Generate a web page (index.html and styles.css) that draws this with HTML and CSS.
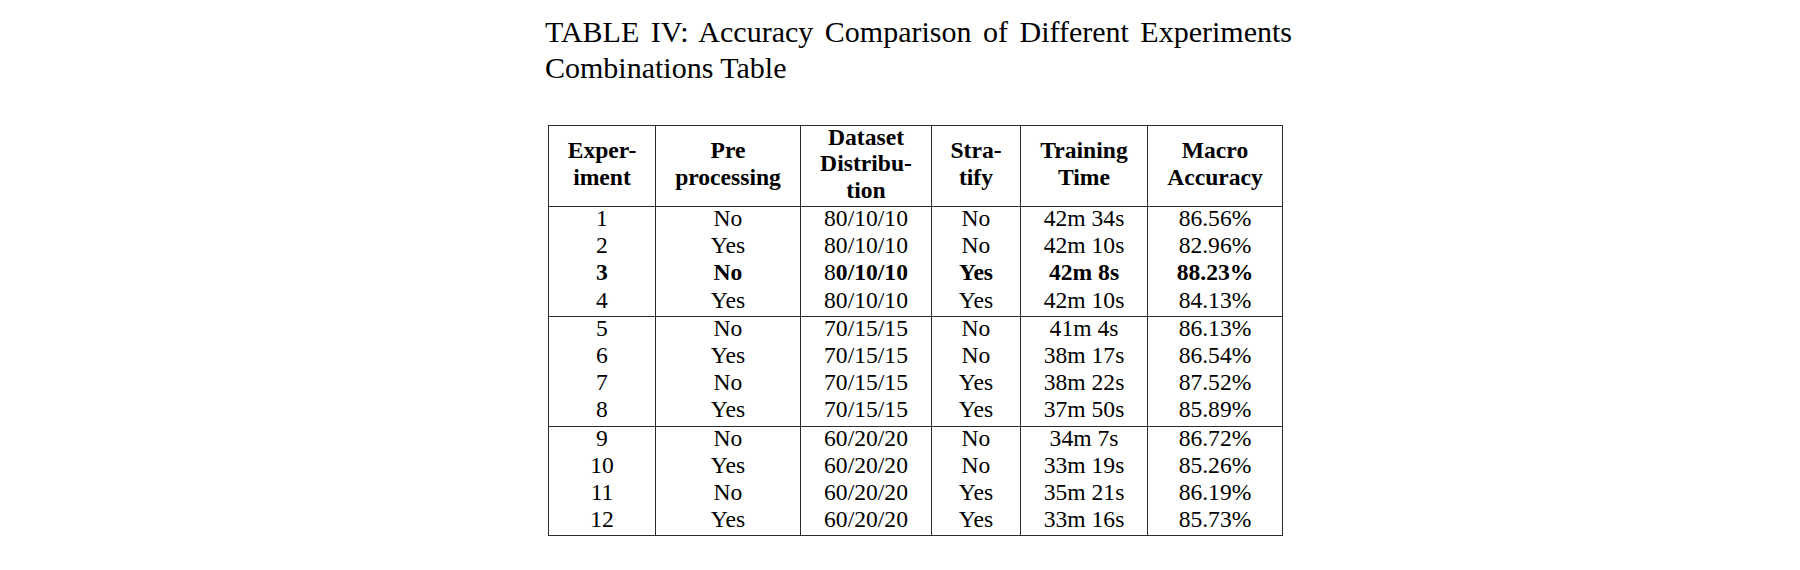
FILE: index.html
```html
<!DOCTYPE html>
<html>
<head>
<meta charset="utf-8">
<link rel="stylesheet" href="styles.css">
</head>
<body>
<div class="page">
  <p class="caption">TABLE IV: Accuracy Comparison of Different Experiments Combinations Table</p>
  <table class="results">
    <colgroup>
      <col class="c1"><col class="c2"><col class="c3"><col class="c4"><col class="c5"><col class="c6">
    </colgroup>
    <thead>
      <tr>
        <th><div class="hd">Exper-<br>iment</div></th>
        <th><div class="hd">Pre<br>processing</div></th>
        <th><div class="hd">Dataset<br>Distribu-<br>tion</div></th>
        <th><div class="hd">Stra-<br>tify</div></th>
        <th><div class="hd">Training<br>Time</div></th>
        <th><div class="hd">Macro<br>Accuracy</div></th>
      </tr>
    </thead>
    <tbody>
      <tr><td>1</td><td>No</td><td>80/10/10</td><td>No</td><td>42m 34s</td><td>86.56%</td></tr>
      <tr><td>2</td><td>Yes</td><td>80/10/10</td><td>No</td><td>42m 10s</td><td>82.96%</td></tr>
      <tr class="best"><td>3</td><td>No</td><td><span class="nb">8</span>0/10/10</td><td>Yes</td><td>42m 8s</td><td>88.23%</td></tr>
      <tr><td>4</td><td>Yes</td><td>80/10/10</td><td>Yes</td><td>42m 10s</td><td>84.13%</td></tr>
    </tbody>
    <tbody>
      <tr><td>5</td><td>No</td><td>70/15/15</td><td>No</td><td>41m 4s</td><td>86.13%</td></tr>
      <tr><td>6</td><td>Yes</td><td>70/15/15</td><td>No</td><td>38m 17s</td><td>86.54%</td></tr>
      <tr><td>7</td><td>No</td><td>70/15/15</td><td>Yes</td><td>38m 22s</td><td>87.52%</td></tr>
      <tr><td>8</td><td>Yes</td><td>70/15/15</td><td>Yes</td><td>37m 50s</td><td>85.89%</td></tr>
    </tbody>
    <tbody>
      <tr><td>9</td><td>No</td><td>60/20/20</td><td>No</td><td>34m 7s</td><td>86.72%</td></tr>
      <tr><td>10</td><td>Yes</td><td>60/20/20</td><td>No</td><td>33m 19s</td><td>85.26%</td></tr>
      <tr><td>11</td><td>No</td><td>60/20/20</td><td>Yes</td><td>35m 21s</td><td>86.19%</td></tr>
      <tr><td>12</td><td>Yes</td><td>60/20/20</td><td>Yes</td><td>33m 16s</td><td>85.73%</td></tr>
    </tbody>
  </table>
</div>
</body>
</html>
```

FILE: styles.css
```css
html, body {
  margin: 0;
  padding: 0;
  background: #ffffff;
}

body {
  font-family: "Liberation Serif", "Times New Roman", serif;
  color: #000000;
  width: 1800px;
  height: 570px;
  overflow: hidden;
}

.page {
  margin-left: 545px;
  padding-top: 14px;
  width: 747px;
}

.caption {
  margin: 0;
  font-size: 30px;
  line-height: 36px;
  text-align: justify;
}

.results {
  margin-top: 39px;
  margin-left: 3px;
  border-collapse: collapse;
  table-layout: fixed;
  width: 734px;
  font-size: 23.6px;
}

.c1 { width: 107px; }
.c2 { width: 145px; }
.c3 { width: 131px; }
.c4 { width: 89px; }
.c5 { width: 127px; }
.c6 { width: 135px; }

.results th,
.results td {
  border-left: 1px solid #2b2b2b;
  border-right: 1px solid #2b2b2b;
  text-align: center;
  white-space: nowrap;
}

.results thead th {
  border-top: 1px solid #2b2b2b;
  border-bottom: 1px solid #2b2b2b;
  font-weight: bold;
  vertical-align: middle;
  padding: 0;
  height: 80px;
  line-height: 26.6px;
}

.hd {
  margin: -2.5px 0 2.5px;
}

.results td {
  padding: 0 0 5.2px;
  line-height: 22px;
}

.results tbody {
  border-bottom: 1px solid #2b2b2b;
}

.best td {
  font-weight: bold;
}

.best .nb {
  font-weight: normal;
}
```
